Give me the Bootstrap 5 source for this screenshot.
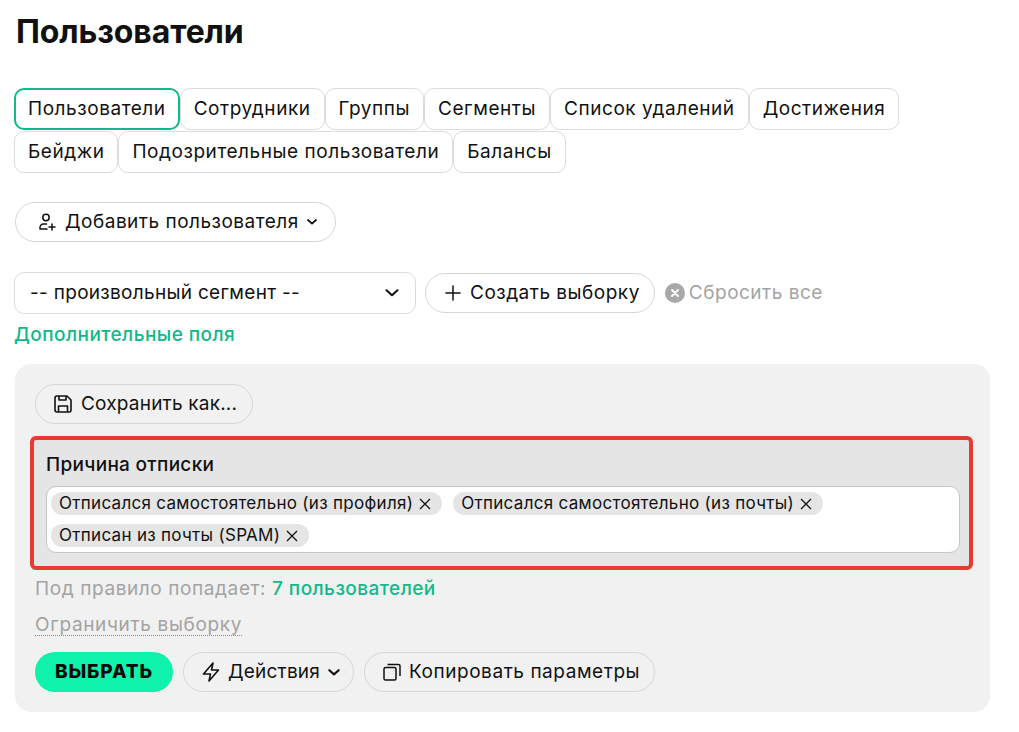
<!DOCTYPE html>
<html lang="ru"><head><meta charset="utf-8">
<title>Пользователи</title>
<link href="https://cdn.jsdelivr.net/npm/bootstrap@5.3.0/dist/css/bootstrap.min.css" rel="stylesheet">
<style>
body{font-family:Inter,"Noto Sans",sans-serif;color:#111;background:#fff;font-size:19px;line-height:24px;letter-spacing:.5px}
.page-wrap{padding:14px 29px 20px 15px;width:1019px}
.page-title{font-size:32px;line-height:36px;font-weight:700;margin:0 0 38px 1px;letter-spacing:-.1px}
.tabs-wrap{display:flex;flex-wrap:wrap;margin-left:-1px;row-gap:1px;width:900px}
.tab-item{height:42px;border:1px solid #dcdcdc;border-radius:10px;padding:0 13px;background:#fff;color:#111;font-size:19px;letter-spacing:.55px;display:flex;align-items:center;white-space:nowrap}
.tab-item.sel{border:2px solid #10b98a;padding:0 12px}
.pill{height:40px;border:1px solid #d6d6d6;border-radius:20px;background:transparent;color:#111;font-size:19px;letter-spacing:.5px;padding:0 18px 0 21px;display:inline-flex;align-items:center;gap:8px;white-space:nowrap}
.add-line{margin-top:29px}
.filter-row{margin-top:30px;margin-left:-1px}
.sel-box{width:402px;height:42px;border:1px solid #dcdcdc;border-radius:10px;padding:0 16px 0 15px;display:flex;align-items:center;justify-content:space-between;letter-spacing:.3px}
.add-gap{gap:9px;padding:0 14px 0 19px;margin-left:9px}
.reset-part{margin-left:10px}
.muted-t{color:#a3a3a3}
.green-t{color:#10b98a;font-weight:500;text-decoration:none;letter-spacing:.45px}
.link-line{margin-top:9px;margin-left:-1px}
.filter-panel{background:#f1f1f1;border-radius:16px;padding:20px;height:348px;margin-top:17px;width:975px}
.save-btn{padding:0 15px 0 17px;letter-spacing:.2px}
.red-box{border:4px solid #e83b30;border-radius:6px;background:#e5e5e5;margin:12px -3px 0 -5px;padding:13px 9px 13px 12px;height:134px}
.field-label{font-size:19px;font-weight:500;line-height:24px;letter-spacing:.3px;margin-bottom:9px}
.tok-input{height:67px;background:#fff;border:1px solid #c6c6c6;border-radius:10px;padding:5px 4px;display:flex;flex-wrap:wrap;align-content:flex-start;gap:9px 11px}
.tok{height:23px;background:#e5e5e5;border-radius:12px;font-size:17px;letter-spacing:.3px;line-height:23px;padding:0 11px 0 8px;display:inline-flex;align-items:center;gap:6px;white-space:nowrap}
.rule-line{margin-top:7px;letter-spacing:.6px}
.limit-line{margin-top:12px;height:22px}
.btn-line{margin-top:17px;gap:10px}
.go-btn{height:40px;width:138px;border-radius:20px;background:#0ff2ab;color:#0a0a0a;font-weight:800;font-size:19px;border:0;letter-spacing:.9px}
.under-d{border-bottom:1px dotted #8a8a8a;line-height:21px;display:inline-block;color:#a3a3a3;letter-spacing:.65px}
.act-btn{padding:0 13px 0 18px;letter-spacing:.2px}
.copy-btn{padding:0 14px 0 18px;letter-spacing:.55px}
svg{flex:none}
</style></head><body>
<div class="page-wrap">
<h1 class="page-title">Пользователи</h1>
<div class="tabs-wrap">
<div class="tab-item sel">Пользователи</div><div class="tab-item">Сотрудники</div><div class="tab-item">Группы</div><div class="tab-item">Сегменты</div><div class="tab-item">Список удалений</div><div class="tab-item">Достижения</div><div class="tab-item">Бейджи</div><div class="tab-item">Подозрительные пользователи</div><div class="tab-item">Балансы</div>
</div>
<div class="add-line"><button class="pill" type="button">
<svg width="20" height="20" viewBox="0 0 20 20" fill="none" stroke="#111" stroke-width="1.500" stroke-linecap="round"><circle cx="9" cy="5.500" r="3.200"/><path d="M3 17v-1.500c0-2 1.600-3.500 3.500-3.500h3M3 17h7M15 12v6M12 15h6"/></svg>
Добавить пользователя
<svg width="10" height="6" viewBox="0 0 10 6" fill="none" stroke="#111" stroke-width="1.800" stroke-linecap="round" stroke-linejoin="round"><path d="M1 1l4 3.600L9 1"/></svg></button></div>
<div class="filter-row d-flex align-items-center">
<div class="sel-box">-- произвольный сегмент --<svg width="14" height="8" viewBox="0 0 14 8" fill="none" stroke="#111" stroke-width="2" stroke-linecap="round" stroke-linejoin="round"><path d="M1.500 1.200L7 6.200l5.500-5"/></svg></div>
<button class="pill add-gap" type="button"><svg width="16" height="16" viewBox="0 0 16 16" fill="none" stroke="#111" stroke-width="1.500" stroke-linecap="round"><path d="M8 1v14M1 8h14"/></svg>Создать выборку</button>
<div class="d-flex align-items-center gap-1 muted-t reset-part"><svg width="20" height="20" viewBox="0 0 20 20"><circle cx="10" cy="10" r="10" fill="#a8a8a8"/><path d="M7 7l6 6M13 7l-6 6" stroke="#fff" stroke-width="2" stroke-linecap="round"/></svg>Сбросить все</div>
</div>
<div class="link-line"><a class="green-t" href="#">Дополнительные поля</a></div>
<div class="filter-panel">
<button class="pill save-btn" type="button"><svg width="20" height="20" viewBox="0 0 20 20" fill="none" stroke="#111" stroke-width="1.600" stroke-linejoin="round"><path d="M2 4a2 2 0 0 1 2-2h10l4 4v10a2 2 0 0 1-2 2H4a2 2 0 0 1-2-2z"/><path d="M6 2v4h7V2M5.500 18v-6h9v6"/></svg>Сохранить как...</button>
<div class="red-box">
<div class="field-label">Причина отписки</div>
<div class="tok-input">
<span class="tok">Отписался самостоятельно (из профиля)<svg width="12" height="12" viewBox="0 0 12 12" fill="none" stroke="#111" stroke-width="1.300"><path d="M1 1l10 10M11 1L1 11"/></svg></span>
<span class="tok">Отписался самостоятельно (из почты)<svg width="12" height="12" viewBox="0 0 12 12" fill="none" stroke="#111" stroke-width="1.300"><path d="M1 1l10 10M11 1L1 11"/></svg></span>
<span class="tok">Отписан из почты (SPAM)<svg width="12" height="12" viewBox="0 0 12 12" fill="none" stroke="#111" stroke-width="1.300"><path d="M1 1l10 10M11 1L1 11"/></svg></span>
</div></div>
<div class="rule-line muted-t">Под правило попадает: <a class="green-t" href="#">7 пользователей</a></div>
<div class="limit-line"><span class="under-d">Ограничить выборку</span></div>
<div class="d-flex btn-line"><button class="go-btn" type="button">ВЫБРАТЬ</button>
<button class="pill act-btn" type="button"><svg width="18" height="20" viewBox="0 0 18 20" fill="none" stroke="#111" stroke-width="1.600" stroke-linejoin="round"><path d="M11 1L1.500 12H8.500L7 19l9.500-11H9.500z"/></svg>Действия<svg width="12" height="7" viewBox="0 0 10 6" fill="none" stroke="#111" stroke-width="1.800" stroke-linecap="round" stroke-linejoin="round"><path d="M1 1l4 3.600L9 1"/></svg></button>
<button class="pill copy-btn" type="button"><svg width="18" height="18" viewBox="0 0 18 18" fill="none" stroke="#111" stroke-width="1.500"><rect x="1" y="4.500" width="12" height="12.500" rx="1.500"/><path d="M4.500 1.500h11a1.500 1.500 0 0 1 1.500 1.500v10"/></svg>Копировать параметры</button></div>
</div>
</div>
<script src="https://cdn.jsdelivr.net/npm/bootstrap@5.3.0/dist/js/bootstrap.bundle.min.js"></script>
</body></html>
